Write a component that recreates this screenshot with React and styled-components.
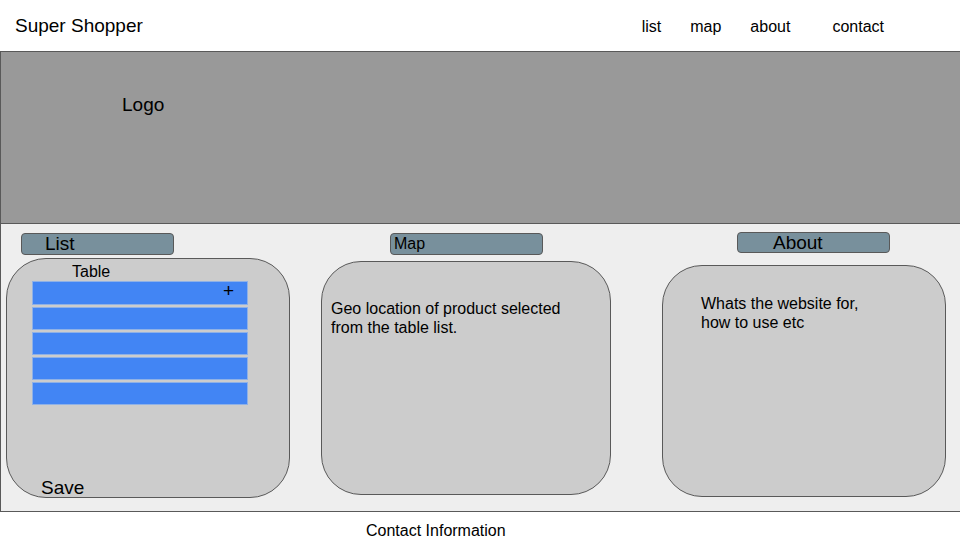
import React from "react";
import styled, { createGlobalStyle } from "styled-components";

const GlobalStyle = createGlobalStyle`
  *, *::before, *::after { box-sizing: border-box; }
  body {
    margin: 0;
    background: #fff;
    color: #000;
    font: 16px/19px "Liberation Sans", Arial, sans-serif;
  }
`;

const Page = styled.div`
  display: flex;
  flex-direction: column;
  min-height: 100vh;
`;

const Header = styled.header`
  display: flex;
  align-items: center;
  justify-content: space-between;
  min-height: 51px;
  padding: 1px 76px 0 15px;
`;

const Brand = styled.h1`
  margin: 0;
  font-size: 19px;
  line-height: 22px;
  font-weight: 400;
`;

const Nav = styled.nav`
  display: flex;
  align-items: center;
  gap: 29px;
`;

const NavLink = styled.a`
  color: inherit;
  text-decoration: none;
  margin-left: ${(p) => (p.$apart ? "13px" : "0")};
`;

const Hero = styled.section`
  min-height: 173px;
  padding: 42px 121px;
  border: solid #595959;
  border-width: 1px 0 1px 1px;
  background: #999;
  font-size: 19px;
  line-height: 22px;
`;

const Board = styled.main`
  flex: 1;
  display: flex;
  padding: 0 14px 0 5px;
  border: solid #595959;
  border-width: 0 0 1px 1px;
  background: #eee;
`;

const Column = styled.section`
  flex: ${(p) => p.$grow} 1 0;
  min-width: 0;
  display: flex;
  flex-direction: column;
  gap: ${(p) => p.$gap};
  margin-left: ${(p) => p.$before || "0"};
  padding: ${(p) => p.$pad};
`;

const Tag = styled.h2`
  width: 153px;
  margin: 0 0 0 ${(p) => p.$indent};
  padding: ${(p) => (p.$short ? "1px" : "0")} 0 0 ${(p) => p.$inset};
  border: 1px solid #595959;
  border-radius: 4px;
  background: #78909c;
  font-size: ${(p) => p.$size || "19px"};
  line-height: ${(p) => (p.$short ? "18px" : "20px")};
  font-weight: 400;
`;

const Card = styled.div`
  flex: 1;
  display: flex;
  flex-direction: column;
  padding: ${(p) => p.$pad || "0"};
  border: 1px solid #595959;
  border-radius: 40px;
  background: #ccc;
`;

const CardText = styled.p`
  margin: 0;
`;

const TableArea = styled.div`
  padding: 0 41px 0 25px;
`;

const ItemTable = styled.table`
  width: 100%;
  border-collapse: separate;
  border-spacing: 0 2px;
`;

const Caption = styled.caption`
  padding-left: 40px;
  padding-top: 3px;
  height: 20px;
  line-height: 19px;
  text-align: left;
`;

const Cell = styled.td`
  height: ${(p) => (p.$first ? "24px" : "23px")};
  padding: 0 13px 0 0;
  border: 1px solid #8fb1e6;
  background: #4285f4;
  line-height: 0;
  text-align: right;
  vertical-align: top;
`;

const TextButton = styled.button`
  padding: 0;
  border: 0;
  background: none;
  color: inherit;
  font: inherit;
  font-size: 19px;
  line-height: 18px;
  cursor: pointer;
`;

const SaveRow = styled.div`
  display: flex;
  margin-top: auto;
  padding-left: 34px;
`;

const Footer = styled.footer`
  min-height: 28px;
  padding: 9px 20px 0 366px;
`;

const rows = [1, 2, 3, 4, 5];

export default function App() {
  return (
    <Page>
      <GlobalStyle />
      <Header>
        <Brand>Super Shopper</Brand>
        <Nav>
          <NavLink href="#list">list</NavLink>
          <NavLink href="#map">map</NavLink>
          <NavLink href="#about">about</NavLink>
          <NavLink href="#contact" $apart>contact</NavLink>
        </Nav>
      </Header>
      <Hero>Logo</Hero>
      <Board>
        <Column id="list" $grow={284} $gap="3px" $pad="9px 0 13px">
          <Tag $indent="15px" $inset="23px">List</Tag>
          <Card>
            <TableArea>
              <ItemTable>
                <Caption>Table</Caption>
                <tbody>
                  {rows.map((n) => (
                    <tr key={n}>
                      <Cell $first={n === 1}>
                        {n === 1 && (
                          <TextButton type="button" aria-label="Add row">+</TextButton>
                        )}
                      </Cell>
                    </tr>
                  ))}
                </tbody>
              </ItemTable>
            </TableArea>
            <SaveRow>
              <TextButton type="button">Save</TextButton>
            </SaveRow>
          </Card>
        </Column>
        <Column id="map" $grow={290} $gap="6px" $before="31px" $pad="9px 0 16px">
          <Tag $indent="69px" $inset="3px" $size="16px">Map</Tag>
          <Card $pad="37px 40px 20px 9px">
            <CardText>Geo location of product selected from the table list.</CardText>
          </Card>
        </Column>
        <Column id="about" $grow={284} $gap="12px" $before="51px" $pad="8px 0 14px">
          <Tag $indent="75px" $inset="35px" $short>About</Tag>
          <Card $pad="28px 60px 20px 38px">
            <CardText>Whats the website for, how to use etc</CardText>
          </Card>
        </Column>
      </Board>
      <Footer id="contact">Contact Information</Footer>
    </Page>
  );
}
